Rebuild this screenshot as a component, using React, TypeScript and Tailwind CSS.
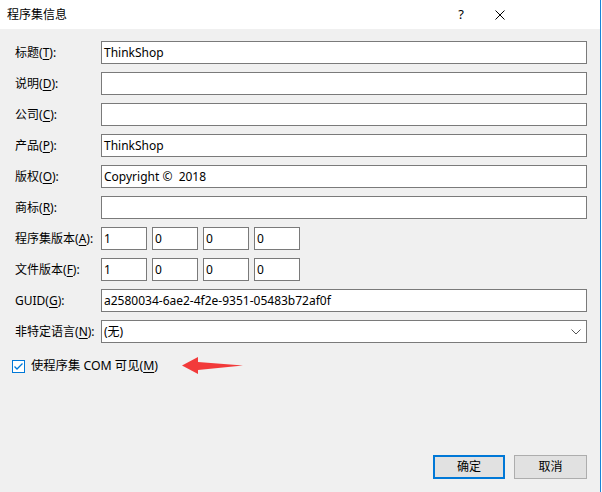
const font = { fontFamily: '"Noto Sans", "Noto Sans CJK SC", sans-serif' };

const Mn = ({ c }: { c: string }) => <u className="underline underline-offset-2">{c}</u>;

const Label = ({ text, k }: { text: string; k: string }) => (
  <div className="flex h-[23px] items-center text-[12px] text-black whitespace-nowrap">
    {text}(<Mn c={k} />):
  </div>
);

const Field = ({ value = '' }: { value?: string }) => (
  <div className="flex h-[23px] items-center whitespace-pre border border-[#7a7a7a] bg-white pl-[2px] text-[12px] text-black">
    {value}
  </div>
);

const Version = ({ parts }: { parts: string[] }) => (
  <div className="flex gap-[5px]">
    {parts.map((p, i) => (
      <div
        key={i}
        className="flex h-[23px] w-[46px] items-center border border-[#7a7a7a] bg-white pl-[2px] text-[12px] text-black"
      >
        {p}
      </div>
    ))}
  </div>
);

export default function App() {
  return (
    <div className="flex h-[492px] w-[602px] bg-white" style={font}>
      <div className="flex w-[600px] flex-col">
        {/* title bar */}
        <div className="flex h-[29px] items-center bg-white pl-[7px]">
          <span className="text-[12px] text-black">程序集信息</span>
          <span className="ml-auto mr-[31px] text-[13px] text-black">?</span>
          <svg width="10" height="10" viewBox="0 0 10 10" className="mr-[95px]">
            <path d="M0.5 0.5 L9.5 9.5 M9.5 0.5 L0.5 9.5" stroke="#000" strokeWidth="1" />
          </svg>
        </div>

        <div className="flex flex-1 flex-col bg-[#f0f0f0] pl-[15px] pr-[13px] pt-[12px] pb-[13px]">
          <div className="grid grid-cols-[86px_1fr] gap-y-[8px]">
            <Label text="标题" k="T" />
            <Field value="ThinkShop" />
            <Label text="说明" k="D" />
            <Field />
            <Label text="公司" k="C" />
            <Field />
            <Label text="产品" k="P" />
            <Field value="ThinkShop" />
            <Label text="版权" k="O" />
            <Field value="Copyright ©  2018" />
            <Label text="商标" k="R" />
            <Field />
            <Label text="程序集版本" k="A" />
            <Version parts={['1', '0', '0', '0']} />
            <Label text="文件版本" k="F" />
            <Version parts={['1', '0', '0', '0']} />
            <Label text="GUID" k="G" />
            <Field value="a2580034-6ae2-4f2e-9351-05483b72af0f" />
            <Label text="非特定语言" k="N" />
            <div className="flex h-[23px] items-center border border-[#7a7a7a] bg-white pl-[2px] pr-[5px] text-[12px] text-black">
              <span>(无)</span>
              <svg width="10" height="6" viewBox="0 0 10 6" className="ml-auto">
                <path d="M0.5 0.5 L5 5 L9.5 0.5" fill="none" stroke="#555" strokeWidth="1" />
              </svg>
            </div>
          </div>

          {/* checkbox row */}
          <div className="mt-[13px] -ml-[3px] flex h-[20px] items-center">
            <svg width="13" height="13" viewBox="0 0 13 13">
              <rect x="0.5" y="0.5" width="12" height="12" fill="#fff" stroke="#0078d7" />
              <path d="M2.5 6.5 L5 9 L10.5 3.5" fill="none" stroke="#0078d7" strokeWidth="1.3" />
            </svg>
            <span className="ml-[6px] text-[12.3px] text-black">
              使程序集 COM 可见(<Mn c="M" />)
            </span>
            <svg width="62" height="18" viewBox="0 0 62 18" className="ml-[24px]">
              <path d="M0 8.5 L16 0 L16 5 L61 8.5 L16 13 L16 17 Z" fill="#f23a3a" />
            </svg>
          </div>

          {/* buttons */}
          <div className="mt-auto flex justify-end gap-[9px]">
            <button className="h-[24px] w-[72px] border-2 border-[#0078d7] bg-[#e1e1e1] text-[12px] text-black">
              确定
            </button>
            <button className="h-[24px] w-[73px] border border-[#adadad] bg-[#e1e1e1] text-[12px] text-black">
              取消
            </button>
          </div>
        </div>
      </div>
      <div className="w-px bg-[#1883d7]" />
      <div className="w-px bg-white" />
    </div>
  );
}
